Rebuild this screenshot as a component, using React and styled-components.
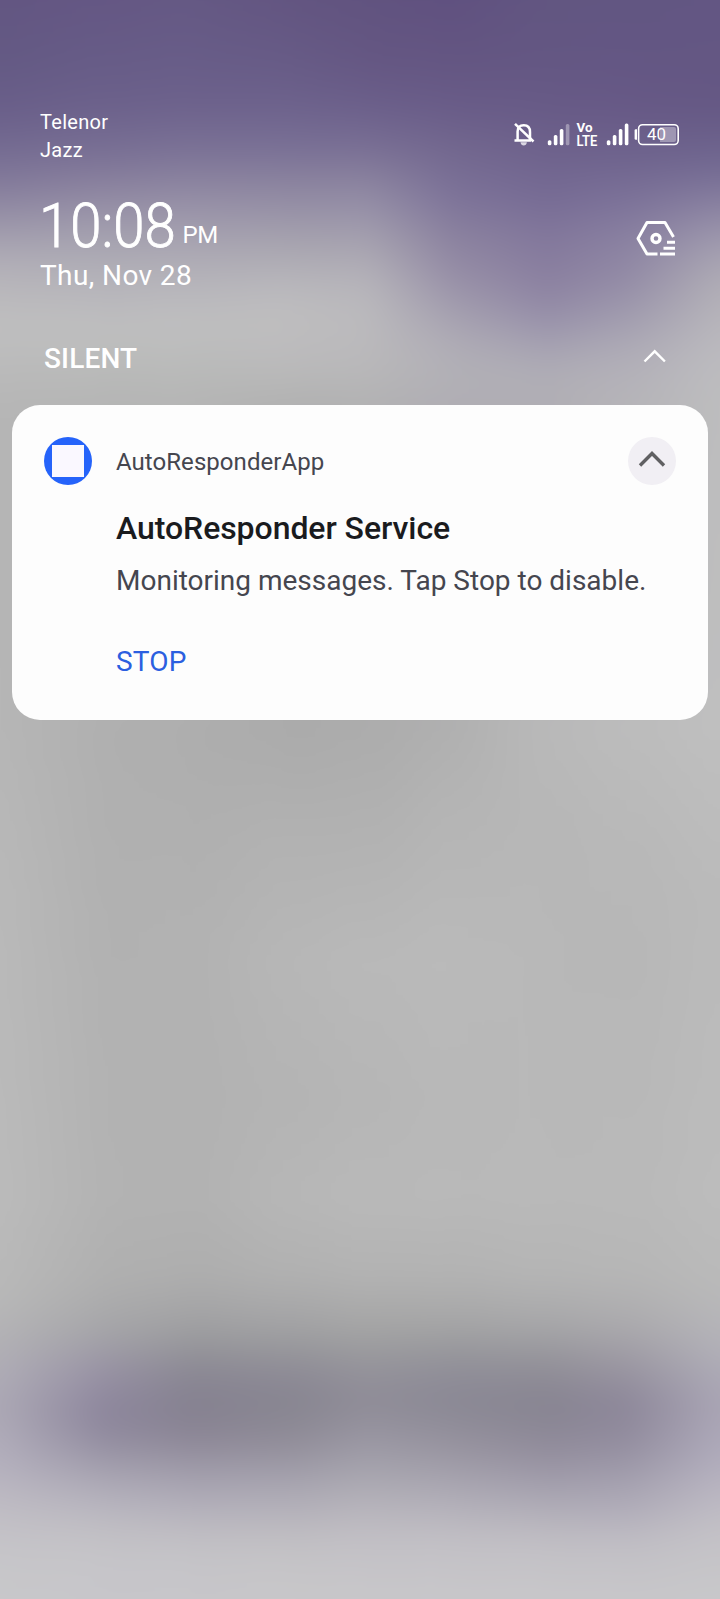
import React from "react";
import styled, { createGlobalStyle } from "styled-components";

const GlobalStyle = createGlobalStyle`
  * { box-sizing: border-box; }
  body { margin: 0; font-family: Roboto, "Noto Sans", sans-serif; }
`;

/* The wallpaper reaches past the screen so that its blur has no pale edge. */
const BLEED = 60;

/* Vertical colour ramps; each fades into the next one across the screen. */
const ramps = [
  { from: 0, to: 0, stops: "#635682 0px, #645a84 60px, #6a5f8a 110px, #756c92 150px, #82799a 180px, #8f88a2 203px, #a19cad 233px, #b1aeb7 262px, #bcbbbd 302px, #bfbfc0 330px, #b9b9b9 380px, #b5b5b5 420px, #b6b6b6 720px, #b9b9b9 900px, #bbbbbb 1200px, #b8b8b8 1300px, #b2b1b5 1340px, #aeabb6 1380px, #aba7b4 1410px, #b3afbd 1460px, #c0bdc4 1510px, #c6c5c9 1550px, #c8c8ca 1599px" },
  { from: 0, to: 100, stops: "#655784 0px, #675c87 60px, #6c618b 105px, #786f94 150px, #887f9d 180px, #9d98ab 220px, #aeacb5 260px, #bab9bd 302px, #bfbfbf 332px, #b9bab9 370px, #b5b5b5 405px, #b0b0b0 740px, #b2b2b2 1000px, #b3b3b3 1200px, #b0b0b0 1280px, #a6a6a9 1330px, #9993a5 1370px, #8d869d 1410px, #918b9f 1435px, #a5a1af 1470px, #b5b2bd 1500px, #c1bfc4 1530px, #c6c5c9 1560px, #c7c6ca 1599px" },
  { from: 100, to: 190, stops: "#655984 0px, #685d88 60px, #6d628c 105px, #7b7296 150px, #89819e 177px, #9a94a9 210px, #adaab4 255px, #bab9bd 297px, #bfbfc0 327px, #b9bab9 370px, #b5b5b5 405px, #aeaeae 740px, #b2b2b2 940px, #b2b2b2 1200px, #aeaeae 1275px, #a2a2a4 1320px, #97979b 1345px, #8b8894 1372px, #858190 1405px, #8b8595 1435px, #a29eac 1475px, #b2afba 1505px, #c0bec3 1535px, #c5c4c8 1560px, #c7c6ca 1599px" },
  { from: 190, to: 290, stops: "#635581 0px, #675b86 60px, #6d628c 105px, #7a7196 150px, #8a829e 180px, #9690a6 207px, #a9a6b0 247px, #bab9bd 290px, #bfbebf 320px, #bcbbbd 350px, #b9b9b9 375px, #b1b1b1 405px, #ababab 730px, #b2b2b2 840px, #b7b7b7 960px, #b4b4b4 1100px, #b7b7b7 1200px, #b1b1b1 1275px, #a3a3a5 1325px, #97979b 1350px, #8c8995 1378px, #878590 1405px, #908c98 1440px, #a5a2ae 1480px, #b4b1ba 1510px, #c1bfc3 1540px, #c6c5c8 1570px, #c8c7c9 1599px" },
  { from: 290, to: 370, stops: "#61537f 0px, #655783 60px, #6b5f8a 105px, #7a7095 150px, #8b839f 182px, #958fa7 205px, #a7a3b0 245px, #b6b4ba 285px, #bbbabd 320px, #b9b8ba 365px, #b2b2b3 405px, #acacac 730px, #b2b2b2 840px, #b9b9b9 960px, #b6b6b6 1100px, #b9b9b9 1200px, #b3b3b3 1275px, #a6a6a6 1325px, #9b9b9e 1350px, #93919a 1375px, #8f8c97 1405px, #9a97a3 1440px, #aaa8b1 1480px, #bab7be 1515px, #c3c1c6 1545px, #c8c7ca 1599px" },
  { from: 370, to: 450, stops: "#605180 0px, #645682 60px, #695c88 105px, #73688f 150px, #7d7399 195px, #8b829f 235px, #978fa7 275px, #a49faf 310px, #b0adb6 345px, #b2b1b6 380px, #b0adb4 405px, #b0b0b0 730px, #b5b5b5 820px, #bababa 960px, #b8b8b8 1100px, #b9b9b9 1200px, #b3b3b3 1275px, #a5a5a6 1325px, #98989c 1350px, #8f8d98 1375px, #8a8894 1405px, #97939f 1445px, #a9a6b1 1485px, #b8b5bd 1515px, #c3c1c6 1545px, #c8c7ca 1599px" },
  { from: 450, to: 545, stops: "#625681 0px, #645783 60px, #685b87 110px, #6e628c 150px, #776c95 200px, #83789c 240px, #897e9f 272px, #9188a5 302px, #9b95ac 326px, #a5a1b1 346px, #b0aeb6 374px, #b0aeb4 405px, #b9b9b9 730px, #b7b7b7 820px, #b8b8b8 960px, #b9b9b9 1200px, #b5b5b5 1275px, #a7a7a9 1325px, #97969c 1355px, #8d8a95 1380px, #878491 1408px, #908b9a 1445px, #a39fad 1485px, #b4b1ba 1515px, #c2c0c5 1545px, #c8c7ca 1599px" },
  { from: 545, to: 625, stops: "#625682 0px, #645784 60px, #675986 105px, #6e638d 155px, #7c7299 200px, #8a81a1 240px, #938ba6 280px, #a09bae 315px, #aeabb6 350px, #b4b2b9 380px, #b5b4b8 405px, #bcbcbc 730px, #b8b8b8 850px, #b7b7b7 960px, #b9b9b9 1200px, #b6b6b6 1275px, #abaaad 1325px, #9b97a2 1365px, #8c8699 1405px, #928c9e 1440px, #a39fae 1480px, #b3afbb 1515px, #c1bfc5 1545px, #c8c7ca 1599px" },
  { from: 625, to: 720, stops: "#635683 0px, #645783 60px, #655884 105px, #6c628c 145px, #776e95 175px, #8a82a1 205px, #a19caf 245px, #afacb5 280px, #b7b5bb 320px, #bcbbbf 360px, #bdbdbe 405px, #bfbfbf 730px, #bababa 900px, #bcbcbc 1200px, #b9b9b9 1290px, #b3b2b8 1340px, #aba8b5 1380px, #a9a4b4 1410px, #afabbb 1455px, #b9b5c1 1490px, #c3c1c6 1530px, #c8c8ca 1599px" },
].map((ramp) => ({
  from: ramp.from + BLEED,
  to: ramp.to + BLEED,
  stops: ramp.stops.replace(/(\d+)px/g, (_, y) => `${Number(y) + BLEED}px`),
}));

const Screen = styled.main`
  position: relative;
  width: 720px;
  height: 1599px;
  overflow: hidden;
  color: #fff;
`;

const Wallpaper = styled.div`
  position: absolute;
  inset: -${BLEED}px;
  filter: blur(14px);
`;

const Ramp = styled.div`
  position: absolute;
  inset: 0;
  background: linear-gradient(to bottom, ${(p) => p.$stops});
  mask-image: ${(p) =>
    p.$to > BLEED ? `linear-gradient(to right, transparent ${p.$from}px, #000 ${p.$to}px)` : "none"};
`;

const Shade = styled.div`
  position: relative;
  display: flex;
  flex-direction: column;
  padding: 108px 12px 0;
`;

const StatusBar = styled.div`
  display: flex;
  justify-content: space-between;
  height: 88px;
  padding: 0 28px;
`;

const Carriers = styled.div`
  font-size: 20px;
  line-height: 28px;
  letter-spacing: 0.3px;
`;

const StatusIcons = styled.svg`
  width: 170px;
  height: 32px;
  margin-top: 10px;
`;

const Header = styled.header`
  display: flex;
  justify-content: space-between;
  height: 145px;
  padding: 0 30px 0 28px;
`;

const Clock = styled.div`
  display: flex;
  align-items: flex-start;
  height: 62px;
`;

const Time = styled.span`
  width: 135px;
  margin-left: -1px;
  font-size: 61px;
  font-weight: 300;
  line-height: 60px;
  white-space: nowrap;
  transform: scaleX(0.922);
  transform-origin: left;
  -webkit-text-stroke: 0.9px #fff;
`;

const Meridiem = styled.span`
  margin: 24px 0 0 8.5px;
  font-size: 24px;
  line-height: 30px;
  letter-spacing: -0.3px;
`;

const DateText = styled.div`
  font-size: 28px;
  line-height: 35px;
  letter-spacing: 0.4px;
`;

const SettingsIcon = styled.svg`
  width: 44px;
  height: 40px;
  margin-top: 22px;
`;

const SectionHeader = styled.div`
  display: flex;
  justify-content: space-between;
  height: 64px;
  padding: 0 41px 0 32px;
`;

const SectionTitle = styled.h2`
  margin: 0;
  font-size: 28px;
  font-weight: 500;
  line-height: 35px;
  letter-spacing: 0.15px;
`;

const SectionChevron = styled.svg`
  width: 24px;
  height: 16px;
  margin-top: 7px;
`;

const Card = styled.article`
  display: flex;
  gap: 24px;
  height: 315px;
  padding: 32px;
  border-radius: 28px;
  background: #fdfdfd;
`;

const AppIcon = styled.div`
  display: grid;
  place-items: center;
  flex: none;
  width: 48px;
  height: 48px;
  border-radius: 50%;
  background: #2563fa;
`;

const AppGlyph = styled.span`
  width: 32px;
  height: 32px;
  background: #faf8ff;
`;

const CardBody = styled.div`
  display: flex;
  flex: 1;
  flex-direction: column;
  align-items: flex-start;
  white-space: nowrap;
`;

const CardTop = styled.div`
  display: flex;
  justify-content: space-between;
  align-self: stretch;
  height: 71px;
`;

const AppName = styled.span`
  color: #45464f;
  font-size: 24px;
  line-height: 50px;
  letter-spacing: 0.05px;
`;

const CollapseButton = styled.button`
  display: grid;
  place-items: center;
  width: 48px;
  height: 48px;
  padding: 0;
  border: 0;
  border-radius: 50%;
  background: #f1eff4;
`;

const Title = styled.h3`
  margin: 0;
  color: #1a1b1e;
  font-size: 32px;
  font-weight: 500;
  line-height: 40px;
  letter-spacing: -0.06px;
`;

const Message = styled.p`
  margin: 13px 0 41px;
  color: #45464f;
  font-size: 28px;
  line-height: 40px;
`;

const Action = styled.button`
  padding: 0;
  border: 0;
  background: none;
  color: #2b5fe0;
  font-family: inherit;
  font-size: 28px;
  line-height: 40px;
  letter-spacing: 0.2px;
`;

function StatusGlyphs() {
  return (
    <StatusIcons viewBox="510 118 170 32" fill="#fff">
      <g fill="none" stroke="#fff" strokeWidth="2.5">
        <path d="M517.6 140V131.5Q517.6 125.2 523.8 125.2Q530 125.2 530 132V140M514.5 140.4H531" />
        <path d="M515 123.8L533.5 141.5" />
      </g>
      <path d="M520.5 142.2h6.4q-.6 3.2-3.2 3.2t-3.2-3.2z" opacity=".75" />
      <rect x="547.8" y="140.3" width="3.6" height="5" rx="1.5" />
      <rect x="553.8" y="135" width="3.6" height="10.3" rx="1.5" />
      <rect x="559.8" y="129" width="3.6" height="16.3" rx="1.5" />
      <rect x="565.8" y="124" width="3.6" height="21.3" rx="1.5" opacity=".35" />
      <text x="576.5" y="132.4" fontSize="12.4" fontWeight="700" textLength="16" lengthAdjust="spacingAndGlyphs">Vo</text>
      <text x="576.5" y="145.8" fontSize="14.2" fontWeight="600" textLength="20.8" lengthAdjust="spacingAndGlyphs">LTE</text>
      <rect x="606.8" y="140.3" width="3.6" height="5" rx="1.5" />
      <rect x="612.8" y="135" width="3.6" height="10.3" rx="1.5" />
      <rect x="618.8" y="129" width="3.6" height="16.3" rx="1.5" />
      <rect x="624.8" y="123.5" width="3.6" height="21.8" rx="1.5" />
      <path d="M637 129.3h-1.2q-1.2 0-1.2 1.2v8q0 1.2 1.2 1.2h1.2z" />
      <rect x="638.6" y="124.7" width="39.6" height="19.8" rx="4" fill="none" stroke="#fff" strokeWidth="1.6" />
      <path d="M660 127h14q2 0 2 2v11q0 2-2 2h-14z" opacity=".35" />
      <text x="647" y="140.4" fontSize="17.2" textLength="19" lengthAdjust="spacingAndGlyphs">40</text>
    </StatusIcons>
  );
}

export default function App() {
  return (
    <Screen>
      <GlobalStyle />
      <Wallpaper>
        {ramps.map((r) => (
          <Ramp key={r.to} $from={r.from} $to={r.to} $stops={r.stops} />
        ))}
      </Wallpaper>
      <Shade>
        <StatusBar>
          <Carriers>
            <div>Telenor</div>
            <div>Jazz</div>
          </Carriers>
          <StatusGlyphs />
        </StatusBar>
        <Header>
          <div>
            <Clock>
              <Time>10:08</Time>
              <Meridiem>PM</Meridiem>
            </Clock>
            <DateText>Thu, Nov 28</DateText>
          </div>
          <SettingsIcon viewBox="634 218 44 40" fill="none" stroke="#fff" strokeWidth="3" strokeLinejoin="round">
            <path d="M657.5 254H647L638 238.5L647 222.5H665L673.5 237" />
            <circle cx="656" cy="238.5" r="4" strokeWidth="3.4" />
            <path d="M667 242.2h8M663.5 248.2h11.5M660 254h15" />
          </SettingsIcon>
        </Header>
        <SectionHeader>
          <SectionTitle>SILENT</SectionTitle>
          <SectionChevron viewBox="0 0 24 16" fill="none" stroke="#fff" strokeWidth="2.4">
            <path d="M1.5 13.5L11.7 3.3L21.9 13.5" />
          </SectionChevron>
        </SectionHeader>
        <Card>
          <AppIcon>
            <AppGlyph />
          </AppIcon>
          <CardBody>
            <CardTop>
              <AppName>AutoResponderApp</AppName>
              <CollapseButton aria-label="Collapse">
                <svg width="48" height="48" viewBox="0 0 48 48" fill="none" stroke="#606062" strokeWidth="3.4">
                  <path d="M12 28.5L24 16.5L36 28.5" />
                </svg>
              </CollapseButton>
            </CardTop>
            <Title>AutoResponder Service</Title>
            <Message>Monitoring messages. Tap Stop to disable.</Message>
            <Action>STOP</Action>
          </CardBody>
        </Card>
      </Shade>
    </Screen>
  );
}
